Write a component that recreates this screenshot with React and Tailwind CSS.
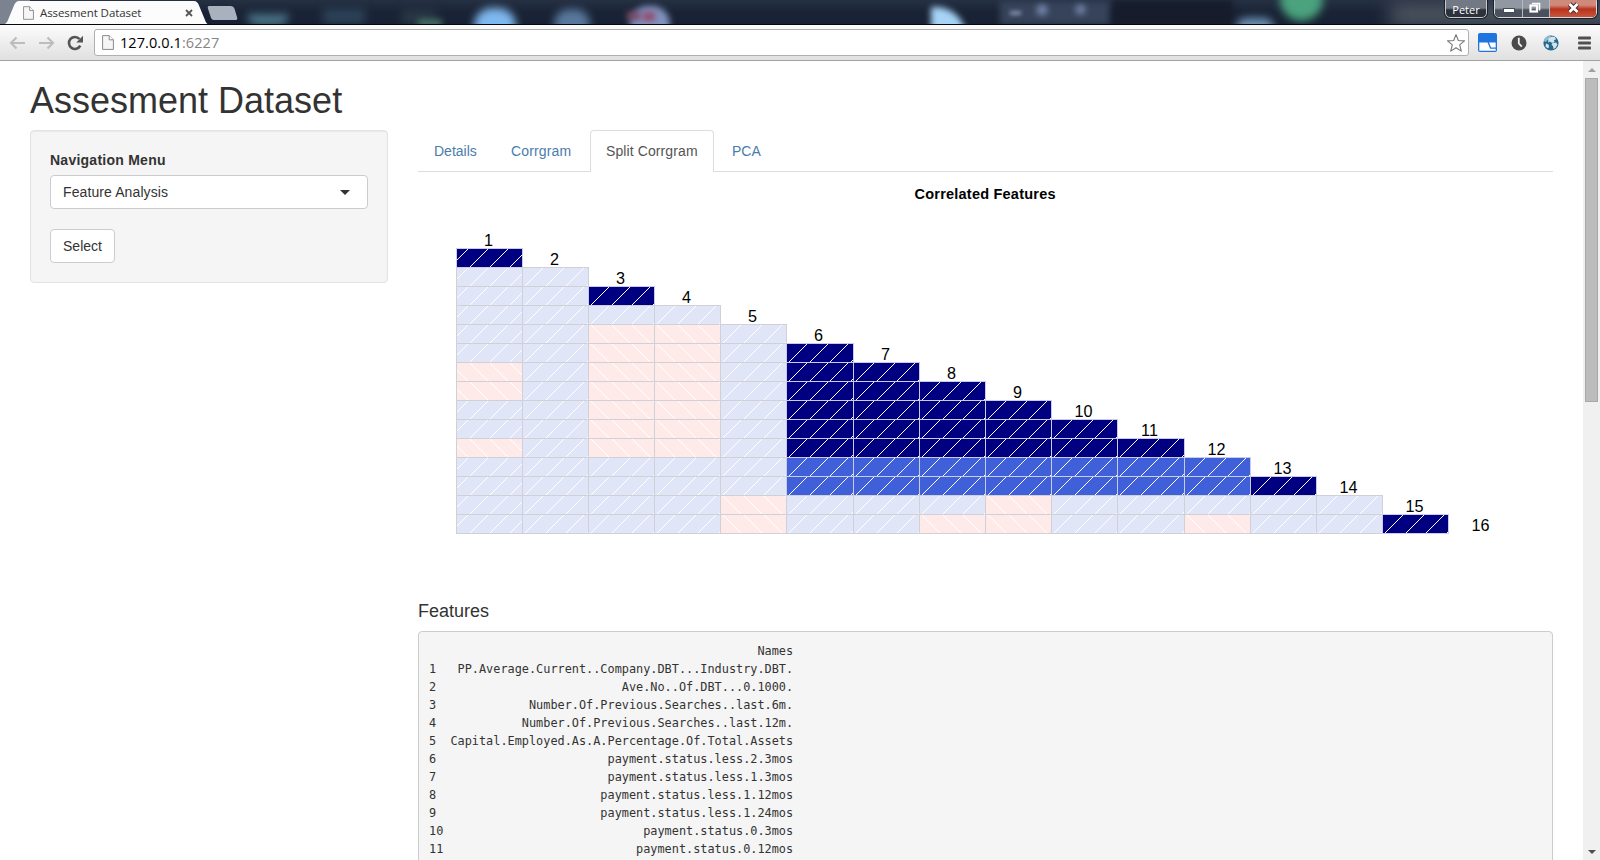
import React from "react";

const COLS = [456, 522, 588, 654, 720, 786, 853, 919, 985, 1051, 1117, 1184, 1250, 1316, 1382, 1448];
const ROWS = [
  "D",
  "LL",
  "LLD",
  "LLLL",
  "LLPPL",
  "LLPPLD",
  "PLPPLDD",
  "PLPPLDDD",
  "LLPPLDDDD",
  "LLPPLDDDDD",
  "PLPPLDDDDDD",
  "LLLLLBBBBBBB",
  "LLLLLBBBBBBBD",
  "LLLLPLLLPLLLLL",
  "LLLLPLLPPLLPLLD",
];
const FILL = { D: "#000080", L: "#e0e6f8", P: "#fdeae9", B: "#3f60d8" };
const X0 = 418;
const Y0 = 172;

function Cell({ kind, col, row }) {
  const x = COLS[col] - X0;
  const w = COLS[col + 1] - COLS[col];
  const y = 248 - Y0 + row * 19;
  const offsets = col === 0 ? [-7, 13, 33, 53] : [2, 23, 43, 64];
  const dark = kind === "D" || kind === "B";
  return (
    <svg x={x} y={y} width={w + 1} height={20} overflow="hidden">
      <rect width={w + 1} height={20} fill={FILL[kind]} />
      {offsets.map((o) =>
        kind === "P" ? (
          <line key={o} x1={o} y1={0} x2={o + 20} y2={20} stroke="#fff" shapeRendering="crispEdges" />
        ) : (
          <line key={o} x1={o} y1={20} x2={o + 20} y2={0} stroke="#fff" shapeRendering="crispEdges" />
        )
      )}
      <rect x="0.5" y="0.5" width={w} height={19} fill="none" stroke={dark ? "#c9cbe8" : "#d0d0d6"} />
    </svg>
  );
}

function Corrgram() {
  return (
    <svg width="1135" height="400" className="block" fontFamily="'Liberation Sans', Arial, sans-serif">
      <text x="567" y="27" textAnchor="middle" fontSize="14.5" fontWeight="bold" textLength="141">
        Correlated Features
      </text>
      {ROWS.map((r, i) => r.split("").map((k, c) => <Cell key={i + "-" + c} kind={k} col={c} row={i} />))}
      {COLS.map((x, i) => (
        <text key={x} x={x - X0 + 32.5} y={246 - Y0 + i * 19} textAnchor="middle" fontSize="16.2">
          {i + 1}
        </text>
      ))}
    </svg>
  );
}

const FEATURES = [
  "PP.Average.Current..Company.DBT...Industry.DBT.",
  "Ave.No..Of.DBT...0.1000.",
  "Number.Of.Previous.Searches..last.6m.",
  "Number.Of.Previous.Searches..last.12m.",
  "Capital.Employed.As.A.Percentage.Of.Total.Assets",
  "payment.status.less.2.3mos",
  "payment.status.less.1.3mos",
  "payment.status.less.1.12mos",
  "payment.status.less.1.24mos",
  "payment.status.0.3mos",
  "payment.status.0.12mos",
];
const LISTING = [
  " ".repeat(46) + "Names",
  ...FEATURES.map((n, i) => String(i + 1).padEnd(3) + n.padStart(48)),
].join("\n");

function PageIcon({ className }) {
  return (
    <svg className={className} viewBox="0 0 12 15" fill="none">
      <path d="M.6.6h6.6l4.2 4.2v9.6H.6z" fill="#f6f6f6" stroke="#8a8a8a" />
      <path d="M7.2.6v4.2h4.2" stroke="#8a8a8a" fill="#fff" />
    </svg>
  );
}

function TitleBar() {
  return (
    <div className="relative h-[25px] shrink-0 overflow-hidden border-b border-[#05080f] bg-linear-to-b from-[#253043] via-[#1a2436] to-[#172133]">
      <div className="absolute left-[-10px] top-0 h-[25px] w-[40px] bg-[#7b8290]" />
      <div className="absolute left-[247px] top-[14px] h-[12px] w-[42px] rounded-b-full bg-[#4a7386] blur-[4px]" />
      <div className="absolute left-[323px] top-[9px] h-[15px] w-[42px] bg-[#2d4359] blur-[5px]" />
      <div className="absolute left-[402px] top-[10px] h-[14px] w-[34px] bg-[#2a3946] blur-[5px]" />
      <div className="absolute left-[418px] top-[20px] h-[6px] w-[24px] bg-[#4f806e] blur-[3px]" />
      <div className="absolute left-[474px] top-[8px] h-[36px] w-[42px] rounded-full bg-[#7fb8f0] blur-[4px]" />
      <div className="absolute left-[554px] top-[9px] h-[30px] w-[36px] rounded-full bg-[#58779c] blur-[4px]" />
      <div className="absolute left-[630px] top-[6px] h-[36px] w-[40px] rounded-full bg-[#8193c0] blur-[3px]" />
      <div className="absolute left-[627px] top-[12px] h-[8px] w-[14px] bg-[#7a4764] blur-[3px]" />
      <div className="absolute left-[643px] top-[12px] h-[9px] w-[12px] bg-[#93476a] blur-[3px]" />
      <div className="absolute left-[931px] top-[7px] h-[30px] w-[35px] rounded-tr-full bg-[#a6d3f6] blur-[3px]" />
      <div className="absolute left-[1000px] top-[1px] h-[24px] w-[110px] bg-[#36435a] blur-[3px]" />
      <div className="absolute left-[1010px] top-[11px] h-[4px] w-[11px] bg-[#8593b2] blur-[2px]" />
      <div className="absolute left-[1037px] top-[5px] size-[10px] bg-[#7485aa] blur-[3px]" />
      <div className="absolute left-[1076px] top-[5px] size-[9px] bg-[#7485aa] blur-[3px]" />
      <div className="absolute left-[1113px] top-0 h-[25px] w-[120px] bg-[#161c2b] blur-[3px]" />
      <div className="absolute left-[1236px] top-[18px] h-[20px] w-[38px] rounded-full bg-[#6f93b5] blur-[4px]" />
      <div className="absolute left-[1280px] top-[-22px] size-[43px] rounded-full bg-[#4aa27e] blur-[4px]" />
      <div className="absolute left-[1390px] top-[3px] h-[24px] w-[240px] bg-[#4d5460] blur-[9px]" />

      <svg className="absolute left-0 top-0" width="240" height="25">
        <path d="M0 25c5 0 7-2 8-5l6-14.500c1.200-3 2.800-4.500 5-4.500h175c2.400 0 4 1.500 5 4.500l6 14.500c1 3 2.500 5 6 5z" fill="#fcfcfc" />
        <path d="M209 6h21.500c2 0 3.300.8 4 2.800l2.600 8.500c.6 1.900 0 2.800-1.800 2.800h-20.500c-2 0-3.200-.8-3.900-2.700l-2.900-8.600c-.6-1.900 0-2.800 1-2.800z" fill="#a9b1bf" />
      </svg>
      <div className="absolute left-[23px] top-0 flex h-[26px] w-[172px] items-center">
        <PageIcon className="h-[14px] w-[11px]" />
        <span className="ml-[6px] grow whitespace-nowrap font-['Open_Sans',sans-serif] text-[11.5px] tracking-[-0.08px] text-[#333]">Assesment Dataset</span>
        <svg width="8" height="8" className="mr-[2px]" stroke="#555" strokeWidth="1.800">
          <path d="M1 1l6 6M7 1l-6 6" />
        </svg>
      </div>

      <div className="absolute left-[1445px] top-[-4px] flex h-[22px] w-[42px] items-center justify-center rounded-[5px] border border-[#c5c9d0] bg-linear-to-b from-[#727984] from-55% to-[#2c313b] to-65% pt-[5px] font-['Open_Sans',sans-serif] text-[11px] text-white outline outline-[#1c212b]">
        Peter
      </div>
      <div className="absolute left-[1494px] top-[-4px] flex h-[22px] w-[103px] overflow-hidden rounded-[5px] border border-[#d5d8de] outline outline-[#1c212b]">
        <div className="w-[28px] border-r border-[#b5bac3] bg-linear-to-b from-[#9298a2] from-55% to-[#4b515c] to-65%" />
        <div className="w-[27px] border-r border-[#b5bac3] bg-linear-to-b from-[#9298a2] from-55% to-[#4b515c] to-65%" />
        <div className="grow bg-linear-to-b from-[#d08a7c] from-40% via-[#b8321c] via-60% to-[#c8553c]" />
      </div>
      <svg className="absolute left-[1494px] top-0" width="104" height="20">
        <rect x="9.500" y="8.500" width="11" height="4" fill="#fff" stroke="#454b57" />
        <path d="M38 3.500h7.500v7" fill="none" stroke="#fff" strokeWidth="1.600" />
        <rect x="36.500" y="5.500" width="6.500" height="6" fill="none" stroke="#fff" strokeWidth="2.200" />
        <path d="M75.500 4l8 8M83.500 4l-8 8" stroke="#4a2a2c" strokeWidth="4.600" />
        <path d="M75.500 4l8 8M83.500 4l-8 8" stroke="#fff" strokeWidth="2.800" />
      </svg>
    </div>
  );
}

function Toolbar() {
  return (
    <div className="flex h-[36px] shrink-0 items-center border-b border-[#a3a3a3] bg-linear-to-b from-[#fcfcfc] to-[#e0e0e0] pl-[9px]">
      <svg width="80" height="20" fill="none" className="shrink-0">
        <path d="M16 10H2.500M7.500 4.500L2 10l5.500 5.500" stroke="#bdbdbd" strokeWidth="2.200" />
        <path d="M30 10h13.500M38.500 4.500L44 10l-5.500 5.500" stroke="#bdbdbd" strokeWidth="2.200" />
        <path d="M71.300 12.700A6 6 0 1 1 70.500 6" stroke="#555" strokeWidth="2.600" />
        <path d="M74 2.800v6.700h-6.700z" fill="#555" />
      </svg>
      <div className="ml-[5px] flex h-[27px] w-[1375px] items-center rounded-[3px] border border-[#b0b0b0] bg-white pl-[7px]">
        <PageIcon className="h-[15px] w-[12px] shrink-0" />
        <span className="ml-[6px] grow pt-px font-['Open_Sans',sans-serif] text-[14.5px] tracking-[0.08px] text-black">
          127.0.0.1<span className="text-[#858585]">:6227</span>
        </span>
        <svg width="20" height="20" viewBox="0 0 20 20" className="mr-[2px]" fill="#fff" stroke="#777" strokeWidth="1.100">
          <path strokeLinejoin="round" d="M10 1.600l2.300 5.900 6.200.4-4.800 4 1.600 6.200L10 14.700l-5.300 3.400 1.600-6.200-4.800-4 6.200-.4z" />
        </svg>
      </div>
      <svg width="20" height="20" className="ml-[9px] shrink-0">
        <rect x=".5" y=".5" width="18" height="18" rx="1" fill="#1f74e0" stroke="#1f74e0" />
        <path d="M1.300 9.500H9.500l2.700 6.300h5.500v2H1.300z" fill="#fff" />
        <path d="M11 9.500h6.700v5h-4.600z" fill="#fff" />
      </svg>
      <svg width="16" height="16" className="ml-[13px] shrink-0">
        <circle cx="8" cy="8" r="7.500" fill="#4b4b4b" />
        <path d="M7.800 2.800v5.500l3 3.300" fill="none" stroke="#f0f0f0" strokeWidth="1.800" />
      </svg>
      <svg width="16" height="16" className="ml-[16px] shrink-0">
        <circle cx="8" cy="8" r="7.600" fill="#27698c" />
        <path d="M8 .5a7.500 7.500 0 0 0-7.300 5.500l2.300 1 1.500-2 2 .5z" fill="#8fb9cd" />
        <path d="M6 3l3-1.500 3 .5 1 2.500-2 .5.500 2-2.500 1-2-1.500-2 1 .500-2.500zM9.500 8l3.500-.5 1.500 2-2 3.500-2 1-.5-3-1.500-1zM3 8.500l2.500 1L6 12l-1 1.500-2.500-2z" fill="#d3e6ee" />
      </svg>
      <svg width="13" height="14" className="ml-[19px] shrink-0" fill="#505050">
        <rect width="13" height="3" y=".5" rx="1" />
        <rect width="13" height="3" y="5.500" rx="1" />
        <rect width="13" height="3" y="10.500" rx="1" />
      </svg>
    </div>
  );
}

function Sidebar() {
  return (
    <div className="h-[153px] w-[358px] shrink-0 rounded border border-[#e3e3e3] bg-[#f5f5f5] p-[19px] shadow-[inset_0_1px_1px_rgba(0,0,0,0.05)]">
      <div className="mb-[5px] h-5 text-sm/5 font-bold tracking-[0.25px]">Navigation Menu</div>
      <div className="flex h-[34px] items-center justify-between rounded border border-[#ccc] bg-white pl-3 pr-[17px]">
        <span className="tracking-[0.1px]">Feature Analysis</span>
        <span className="border-x-[5px] border-t-[5px] border-x-transparent border-t-[#333]" />
      </div>
      <button className="mt-5 flex h-[34px] w-[65px] items-center justify-center rounded border border-[#ccc] bg-white">Select</button>
    </div>
  );
}

function Tabs() {
  return (
    <div className="flex h-[42px] border-b border-[#ddd] leading-5 text-[#4a7dab]">
      <div className="w-[77px] py-[11px] pl-4">Details</div>
      <div className="w-[95px] py-[11px] pl-4 tracking-[0.15px]">Corrgram</div>
      <div className="h-[42px] w-[124px] rounded-t border border-b-0 border-[#ddd] bg-white py-[10px] pl-[15px] tracking-[0.1px] text-[#555]">Split Corrgram</div>
      <div className="py-[11px] pl-[18px]">PCA</div>
    </div>
  );
}

function Scrollbar() {
  return (
    <div className="flex w-[17px] shrink-0 flex-col items-center bg-[#f0f0f0]">
      <div className="flex h-[17px] items-center">
        <span className="border-x-4 border-b-4 border-x-transparent border-b-[#a0a0a0]" />
      </div>
      <div className="h-[324px] w-[13px] border border-[#a8a8a8] bg-[#bcbcbc]" />
      <div className="grow" />
      <div className="flex h-[17px] items-center">
        <span className="border-x-4 border-t-4 border-x-transparent border-t-[#505050]" />
      </div>
    </div>
  );
}

export default function App() {
  return (
    <div className="flex h-[860px] w-[1600px] flex-col overflow-hidden bg-white font-['Liberation_Sans',Arial,sans-serif] text-sm text-[#333]">
      <TitleBar />
      <Toolbar />
      <div className="flex min-h-0 grow">
        <div className="min-w-0 grow overflow-hidden pl-[30px] pt-[20px]">
          <h1 className="mb-[9px] h-10 whitespace-nowrap text-[36px]/[40px]">Assesment Dataset</h1>
          <div className="flex gap-[30px]">
            <Sidebar />
            <div className="w-[1135px] shrink-0">
              <Tabs />
              <Corrgram />
              <h4 className="mb-[10px] mt-[29px] h-5 text-[18px]/[20px]">Features</h4>
              <pre className="rounded border border-[#ccc] bg-[#f5f5f5] p-[10px] pt-[10px] font-['DejaVu_Sans_Mono',monospace] text-[11.870px]/[18px]">
                {LISTING}
              </pre>
            </div>
          </div>
        </div>
        <Scrollbar />
      </div>
    </div>
  );
}
